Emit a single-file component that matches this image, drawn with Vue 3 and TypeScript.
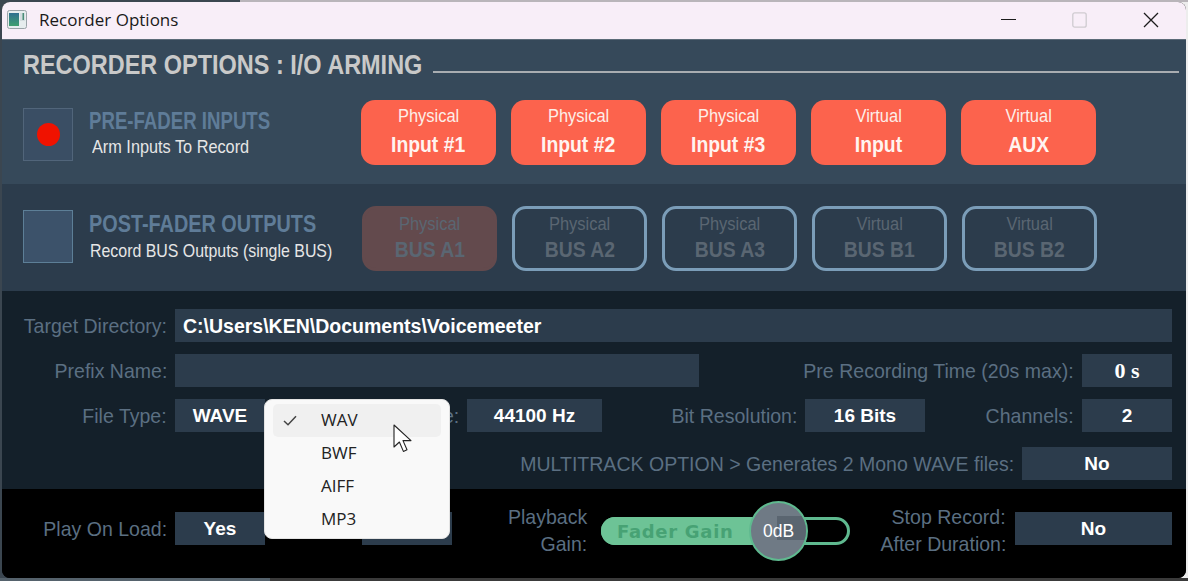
<script setup lang="ts">
const inputs = [
  { top: 'Physical', main: 'Input #1' },
  { top: 'Physical', main: 'Input #2' },
  { top: 'Physical', main: 'Input #3' },
  { top: 'Virtual', main: 'Input' },
  { top: 'Virtual', main: 'AUX' },
]
const outputs = [
  { top: 'Physical', main: 'BUS A1', on: true },
  { top: 'Physical', main: 'BUS A2', on: false },
  { top: 'Physical', main: 'BUS A3', on: false },
  { top: 'Virtual', main: 'BUS B1', on: false },
  { top: 'Virtual', main: 'BUS B2', on: false },
]
const menu = ['WAV', 'BWF', 'AIFF', 'MP3']
</script>

<template>
  <div class="desk">
    <div class="window">
      <header class="titlebar">
        <svg class="appicon" width="20" height="19" viewBox="0 0 20 19">
          <defs>
            <linearGradient id="appfill" x1="0" y1="0" x2="0" y2="1">
              <stop offset="0" stop-color="#2f6f90" />
              <stop offset="1" stop-color="#3f9f70" />
            </linearGradient>
          </defs>
          <rect x="0.5" y="0.5" width="19" height="18" rx="2" fill="#e6ecee" stroke="#9aa3a8" />
          <rect x="2" y="3" width="10" height="13" fill="url(#appfill)" />
          <rect x="13" y="3" width="5" height="8" fill="#d3dcdf" />
          <rect x="15.5" y="3" width="1.5" height="7" fill="#4a8d78" />
        </svg>
        <span class="wintitle">Recorder Options</span>
        <div class="controls">
          <svg class="ctl-min" width="15" height="3" viewBox="0 0 15 3"><path d="M0 1.5h15" stroke="#1c1c1c" stroke-width="1.2" /></svg>
          <svg class="ctl-max" width="15" height="16" viewBox="0 0 15 16"><rect x="0.8" y="0.8" width="13.4" height="14.4" rx="2" fill="none" stroke="#cfcbd0" stroke-width="1.3" /></svg>
          <svg class="ctl-close" width="16" height="16" viewBox="0 0 16 16"><path d="M1 1l14 14M15 1L1 15" stroke="#1c1c1c" stroke-width="1.3" /></svg>
        </div>
      </header>

      <section class="arm arm-in">
        <div class="heading">
          <h1><span>RECORDER OPTIONS : I/O ARMING</span></h1>
          <div class="rule"></div>
        </div>
        <div class="armrow">
          <div class="led"><span class="dot"></span></div>
          <div class="armtext text-in">
            <div class="armname"><span class="name-in">PRE-FADER INPUTS</span></div>
            <div class="armsub sub-in"><span>Arm Inputs To Record</span></div>
          </div>
          <div class="btns">
            <div v-for="b in inputs" :key="b.main + b.top" class="btn on">
              <span class="btop">{{ b.top }}</span>
              <span class="bmain">{{ b.main }}</span>
            </div>
          </div>
        </div>
      </section>

      <section class="arm arm-out">
        <div class="armrow">
          <div class="led led-off"></div>
          <div class="armtext text-out">
            <div class="armname"><span class="name-out">POST-FADER OUTPUTS</span></div>
            <div class="armsub sub-out"><span>Record BUS Outputs (single BUS)</span></div>
          </div>
          <div class="btns btns-out">
            <div v-for="b in outputs" :key="b.main" class="btn dim" :class="{ dimon: b.on }">
              <span class="btop">{{ b.top }}</span>
              <span class="bmain">{{ b.main }}</span>
            </div>
          </div>
        </div>
      </section>

      <section class="fields">
        <div class="frow frow-a">
          <label class="lab"><span>Target Directory:</span></label>
          <div class="box path">C:\Users\KEN\Documents\Voicemeeter</div>
        </div>
        <div class="frow frow-b">
          <label class="lab"><span>Prefix Name:</span></label>
          <div class="box"></div>
          <label class="lab"><span>Pre Recording Time (20s max):</span></label>
          <div class="box val serif">0 s</div>
        </div>
        <div class="frow frow-c">
          <label class="lab"><span>File Type:</span></label>
          <div class="box val">WAVE</div>
          <label class="lab"><span>Sample Rate:</span></label>
          <div class="box val">44100 Hz</div>
          <label class="lab"><span>Bit Resolution:</span></label>
          <div class="box val">16 Bits</div>
          <label class="lab"><span>Channels:</span></label>
          <div class="box val">2</div>
        </div>
        <div class="frow frow-d">
          <label class="lab"><span>MULTITRACK OPTION &gt; Generates 2 Mono WAVE files:</span></label>
          <div class="box val">No</div>
        </div>
      </section>

      <section class="playback">
        <label class="lab"><span>Play On Load:</span></label>
        <div class="box val">Yes</div>
        <span></span>
        <div class="box"></div>
        <label class="lab two gain"><span>Playback</span><span>Gain:</span></label>
        <div class="fader">
          <div class="fill"><span class="fadername">Fader Gain</span></div>
          <div class="knob"><span class="knobshade"></span><span class="knobtext">0dB</span></div>
        </div>
        <label class="lab two stop"><span>Stop Record:</span><span>After Duration:</span></label>
        <div class="box val">No</div>
      </section>
    </div>

    <div class="menu">
      <div v-for="(m, i) in menu" :key="m" class="item" :class="{ hover: i === 0 }">
        <svg v-if="i === 0" class="check" width="14" height="11" viewBox="0 0 14 11"><path d="M1 6l4 3.8L13 1.2" fill="none" stroke="#444" stroke-width="1.5" /></svg>
        <span class="itemtext">{{ m }}</span>
      </div>
    </div>

    <svg class="cursor" width="20" height="29" viewBox="0 0 20 29">
      <path d="M1 1v22l5.4-5 4 9.4 3.6-1.6-4-9.2H18z" fill="#fff" stroke="#222" stroke-width="1.1" stroke-linejoin="round" />
    </svg>
  </div>
</template>

<style>
html, body { margin: 0; background: #000; }
</style>

<style scoped>
.desk {
  position: relative;
  width: 1188px;
  height: 581px;
  overflow: hidden;
  padding: 2px 2px 3px;
  box-sizing: border-box;
  background:
    linear-gradient(90deg, #3b4650 240px, #b9b5ba 240px) top / 100% 2px no-repeat,
    linear-gradient(90deg, #55626c 270px, #3a3a3a 270px) bottom / 100% 3px no-repeat,
    linear-gradient(90deg, #3b4650 50%, #ededed 50%);
}
.window {
  height: 576px;
  border-radius: 8px;
  overflow: hidden;
  background: #000;
  display: flex;
  flex-direction: column;
  font-family: "Liberation Sans", Arial, sans-serif;
}
.titlebar {
  flex: none;
  background: #f8eef8;
  border-bottom: 1px solid #5b6b78;
  box-sizing: border-box;
  height: 38px;
  display: flex;
  align-items: center;
  padding: 0 0 2px 5px;
}
.appicon { flex: none; }
.wintitle {
  margin-left: 12px;
  font-family: "Open Sans", "Noto Sans", sans-serif;
  font-size: 17px;
  color: #1a1a1a;
  white-space: nowrap;
}
.controls {
  margin-left: auto;
  display: flex;
  align-items: center;
  padding-right: 27px;
}
.ctl-min { margin-right: 56px; }
.ctl-max { margin-right: 56px; }

.arm-in { height: 144px; background: #36495a; flex: none; padding: 0 7px 0 21px; box-sizing: border-box; }
.arm-out { height: 107px; background: #2c3c4c; flex: none; padding: 22px 7px 0 21px; box-sizing: border-box; }
.heading { display: flex; height: 60px; padding-top: 10px; box-sizing: border-box; }
.heading h1 {
  margin: 0;
  font-size: 28px;
  line-height: 30px;
  font-weight: 700;
  color: #c9c9c9;
  white-space: nowrap;
  width: 410px;
  flex: none;
}
.heading h1 span { display: inline-block; transform: scaleX(0.838); transform-origin: left center; }
.rule { flex: 1; height: 2px; background: #a9adb1; margin-top: 21px; }
.armrow { display: flex; align-items: center; }
.led {
  width: 50px;
  height: 53px;
  flex: none;
  box-sizing: border-box;
  background: #3a4e64;
  border: 1px solid #51657a;
  margin-top: 3px;
  display: flex;
  align-items: center;
  justify-content: center;
}
.led-off { background: #3c526a; border: 1px solid #5d7f97; align-self: flex-start; margin-top: 4px; }
.dot { width: 23px; height: 23px; border-radius: 50%; background: #f01200; }
.armtext { width: 272px; flex: none; margin-left: 16px; box-sizing: border-box; }
.text-in { padding-top: 2px; }
.text-out { width: 273px; padding-bottom: 2px; }
.armname {
  font-weight: 700;
  font-size: 23px;
  line-height: 26px;
  color: #5f7c98;
  white-space: nowrap;
}
.armname span { display: inline-block; transform-origin: left center; }
.name-in { transform: scaleX(0.81); }
.name-out { transform: scaleX(0.863); }
.armsub {
  font-size: 18.5px;
  line-height: 26px;
  color: #e6e6e6;
  white-space: nowrap;
}
.armsub span { display: inline-block; transform: scaleX(0.88); transform-origin: left center; }
.sub-in { padding-left: 3px; }
.sub-out { padding-left: 1px; line-height: 28px; }
.sub-out span { transform: scaleX(0.86); }
.btns { display: flex; gap: 15px; }
.btn {
  width: 135px;
  height: 65px;
  box-sizing: border-box;
  border-radius: 14px;
  display: flex;
  flex-direction: column;
  align-items: center;
  justify-content: center;
}
.on { background: #fc634d; color: #fdeee8; }
.dim { border: 3px solid #7b9db8; color: #5a6672; }
.dimon { background: #634a4d; border-color: #634a4d; }
.btop { font-size: 17.5px; line-height: 20px; margin-top: 1px; transform: scaleX(0.94); white-space: nowrap; }
.bmain { font-size: 22.5px; line-height: 28px; font-weight: 700; margin-top: 2px; transform: scaleX(0.86); white-space: nowrap; }
.on .btop { margin-top: -1px; }
.on .bmain { color: #fff4f0; margin-top: 5px; }

.fields { height: 198px; flex: none; background: #14202a; padding: 18px 14px 0 22px; box-sizing: border-box; display: flex; flex-direction: column; }
.frow { display: grid; height: 33px; flex: none; }
.frow-a { grid-template-columns: 151px 997px; }
.frow-b { grid-template-columns: 151px 524px 383px 90px; margin-top: 12px; }
.frow-c { grid-template-columns: 151px 90px 202px 135px 203px 120px 157px 90px; margin-top: 12px; }
.frow-d { grid-template-columns: 998px 150px; margin-top: 15px; }
.lab {
  font-size: 21px;
  line-height: 33px;
  color: #5b6f82;
  display: flex;
  justify-content: flex-end;
  padding-right: 8px;
  white-space: nowrap;
  min-width: 0;
}
.lab span { flex: none; transform: scaleX(0.93); transform-origin: right center; }
.box {
  background: #2c3c4c;
  color: #fff;
  font-weight: 700;
  font-size: 19px;
  line-height: 34px;
  height: 33px;
}
.path { padding-left: 8px; white-space: nowrap; font-size: 19.5px; }
.val { text-align: center; }
.serif { font-family: "Liberation Serif", serif; font-size: 22px; }

.playback {
  flex: 1;
  background: #000;
  padding: 23px 14px 0 22px;
  box-sizing: border-box;
  display: grid;
  grid-template-columns: 151px 90px 97px 90px 149px 249px 165px 157px;
  grid-template-rows: 33px;
}
.two { flex-direction: column; align-items: flex-end; justify-content: flex-start; line-height: 27px; margin-top: -9px; }
.gain { padding-right: 14px; }
.stop { padding-right: 9px; }
.fader {
  position: relative;
  height: 28px;
  margin-top: 5px;
  box-sizing: border-box;
  border: 3px solid #5fb98f;
  border-radius: 14px;
}
.fill {
  position: absolute;
  left: -3px;
  top: -3px;
  width: 170px;
  height: 28px;
  background: #6dc396;
  border-radius: 14px 0 0 14px;
  display: flex;
  align-items: center;
  padding-left: 16px;
  box-sizing: border-box;
}
.fadername {
  font-family: "DejaVu Sans", sans-serif;
  font-weight: 700;
  font-size: 18px;
  letter-spacing: 0.7px;
  color: #47a274;
  white-space: nowrap;
}
.knob {
  position: absolute;
  left: 145px;
  top: -19px;
  width: 59px;
  height: 60px;
  box-sizing: border-box;
  border-radius: 50%;
  border: 2px solid #5fb98f;
  background: #6f7a85;
  overflow: hidden;
  display: flex;
  align-items: center;
  justify-content: center;
}
.knobshade { position: absolute; left: 26px; top: 13px; width: 30px; height: 24px; background: #5a6570; }
.knobtext {
  position: relative;
  font-size: 17.5px;
  color: #fff;
}

.menu {
  position: absolute;
  left: 264px;
  top: 399px;
  width: 186px;
  height: 140px;
  box-sizing: border-box;
  background: #f9f9f9;
  border-radius: 8px;
  border: 1px solid #e3e3e3;
  padding: 4px 8px;
}
.item {
  position: relative;
  height: 33px;
  box-sizing: border-box;
  padding: 0 0 2px 48px;
  display: flex;
  align-items: center;
  border-radius: 5px;
  font-family: "Open Sans", "Noto Sans", sans-serif;
  font-size: 17px;
  color: #222;
}
.hover { background: #f0f0f0; }
.check { position: absolute; left: 10px; top: 11px; }
.cursor { position: absolute; left: 393px; top: 424px; }
</style>
